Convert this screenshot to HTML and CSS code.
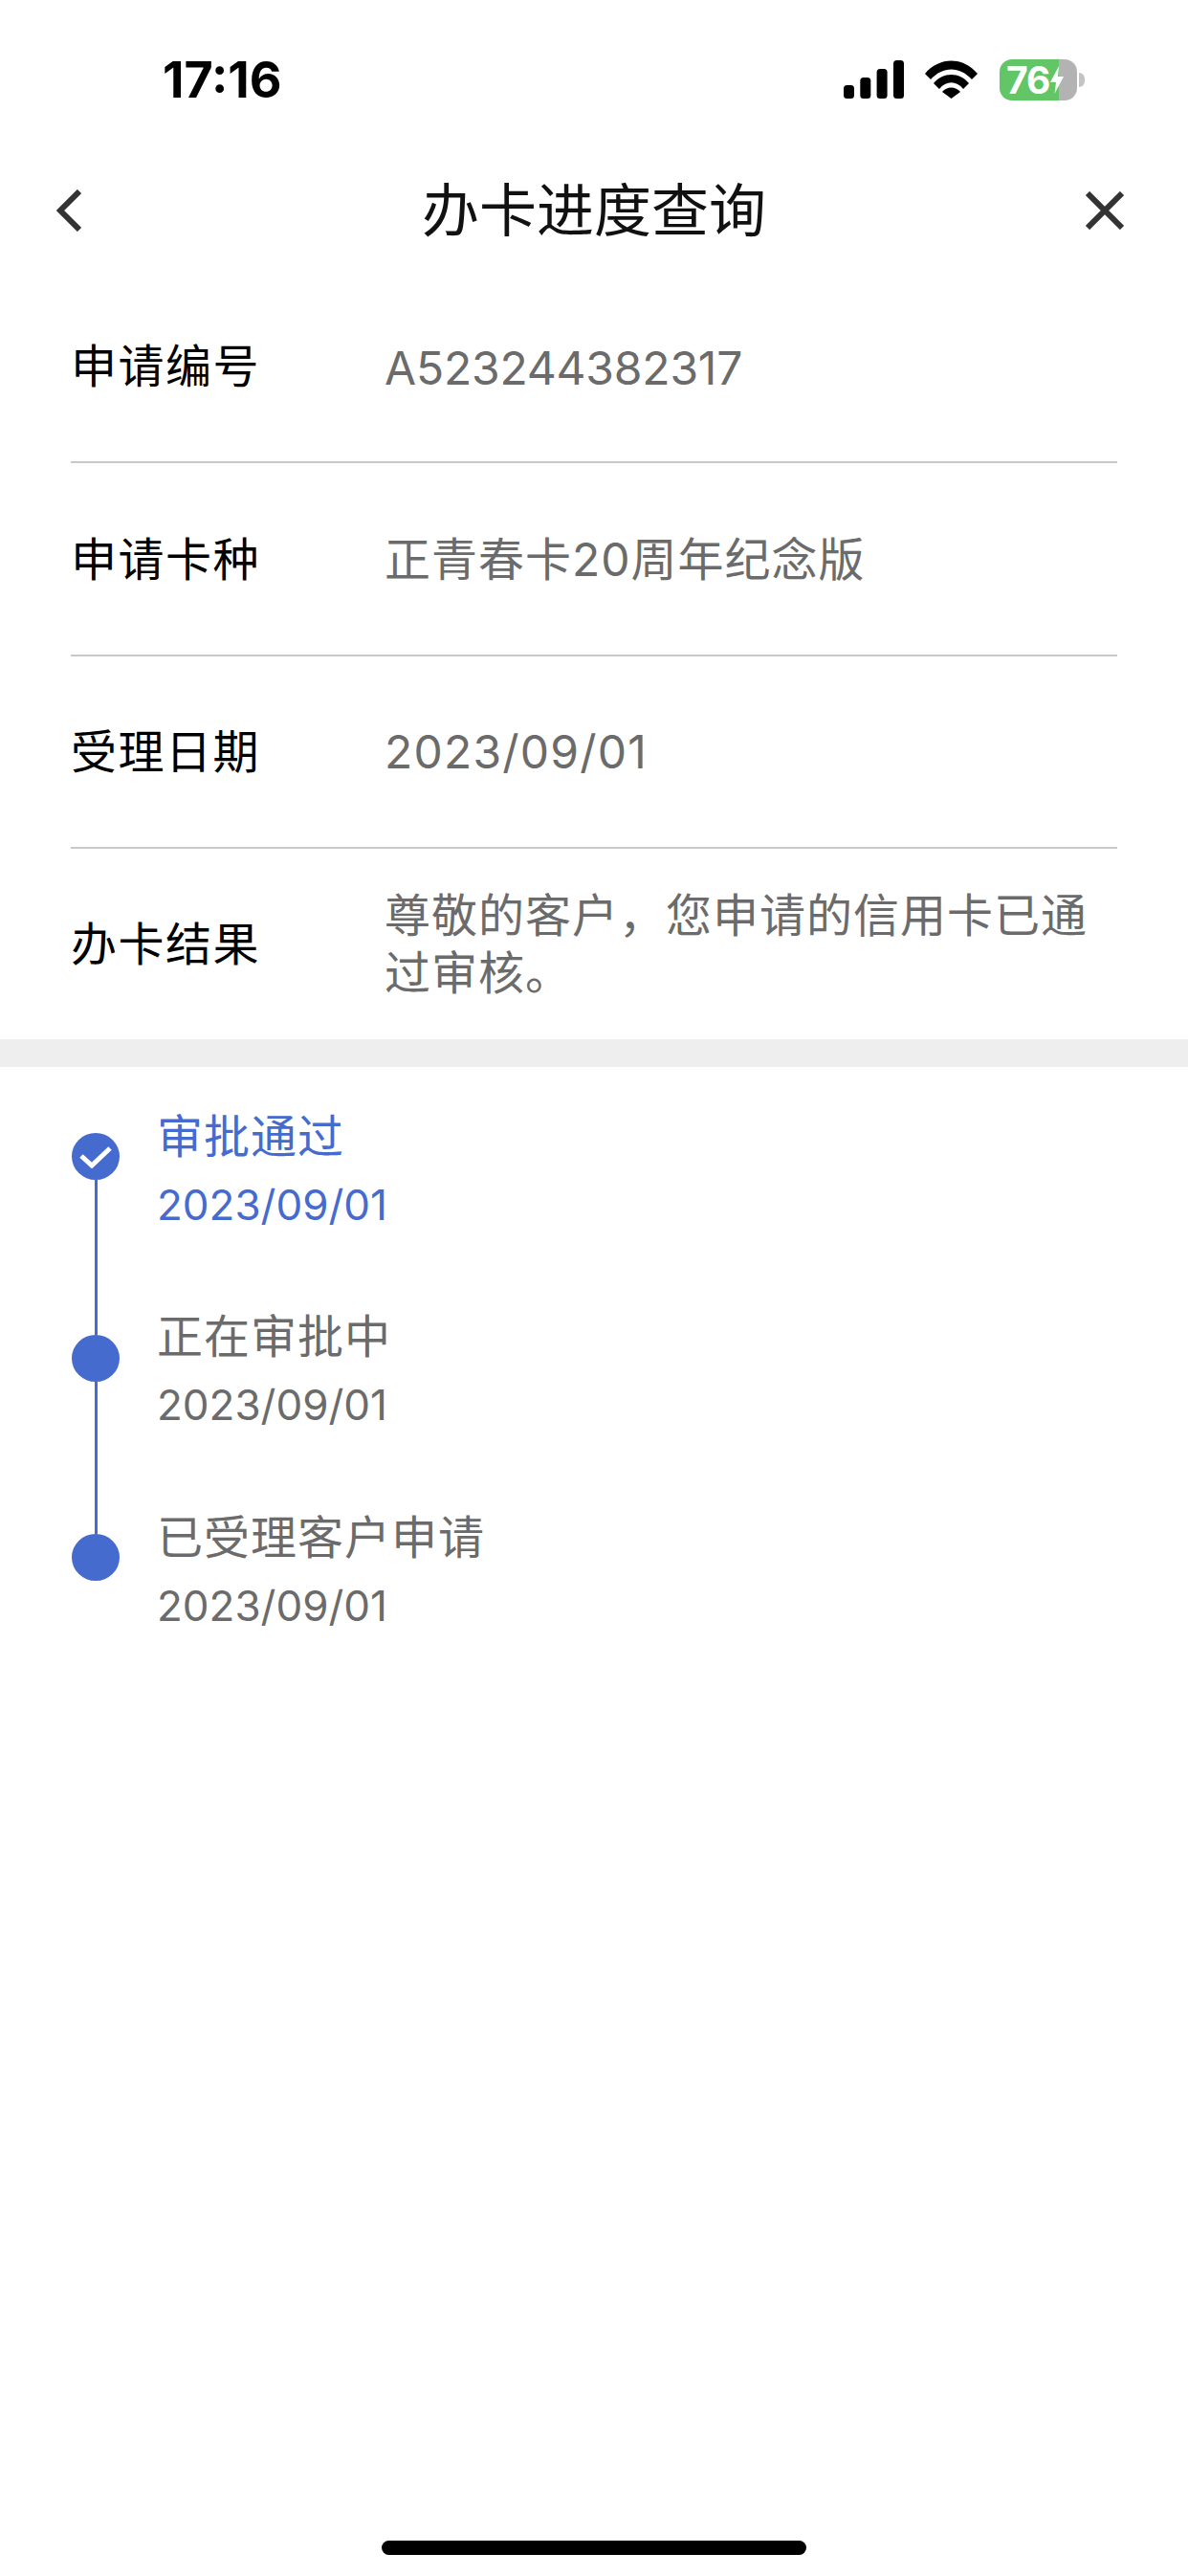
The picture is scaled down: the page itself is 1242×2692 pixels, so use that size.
FILE: index.html
```html
<!DOCTYPE html>
<html lang="zh">
<head>
<meta http-equiv="Content-Type" content="text/html; charset=UTF-8">
<title>办卡进度查询</title>
<link rel="stylesheet" href="styles.css">
</head>
<body>
<div class="screen">
    <!-- 状态栏 -->
    <div class="status">
        <span class="time">17:16</span>
        <div class="status-icons">
            <svg class="signal" width="63" height="40" viewBox="0 0 63 40">
                <rect x="0" y="26" width="11" height="14" rx="3.5"/>
                <rect x="17.3" y="18" width="11" height="22" rx="3.5"/>
                <rect x="34.6" y="9" width="11" height="31" rx="3.5"/>
                <rect x="52" y="0" width="11" height="40" rx="3.5"/>
            </svg>
            <svg class="wifi" width="55" height="40" viewBox="0 0 55 40">
                <path d="M0 14C15 -4 40 -4 55 14L49 20C36 6 19 6 6 20Z"/>
                <path d="M9 24C19 12 36 12 46 24L40 30C33 21 22 21 15 30Z"/>
                <path d="M18 33C23 27 32 27 37 33L27.5 40Z"/>
            </svg>
            <div class="battery">
                <div class="battery-body"><span class="battery-num">76</span>
                    <svg class="bolt" width="14" height="29" viewBox="0 0 14 29"><path d="M9 0L0 17H6L4.500 29L14 11H8Z"/></svg>
                </div>
                <div class="battery-nub"></div>
            </div>
        </div>
    </div>

    <!-- 导航栏 -->
    <div class="nav">
        <svg class="nav-back" width="26" height="44" viewBox="0 0 26 44"><path d="M24 2L4 22L24 42"/></svg>
        <h1 class="nav-title">办卡进度查询</h1>
        <svg class="nav-close" width="40" height="40" viewBox="0 0 40 40"><path d="M2 2L38 38M38 2L2 38"/></svg>
    </div>

    <!-- 申请信息 -->
    <div class="info">
        <div class="row row-top"><span class="label">申请编号</span><span class="value value-no">A523244382317</span></div>
        <div class="row row-top"><span class="label">申请卡种</span><span class="value">正青春卡20周年纪念版</span></div>
        <div class="row row-third"><span class="label">受理日期</span><span class="value value-date">2023/09/01</span></div>
        <div class="row row-last"><span class="label">办卡结果</span><span class="value">尊敬的客户，您申请的信用卡已通过审核。</span></div>
    </div>

    <div class="band"></div>

    <!-- 审批进度 -->
    <ul class="steps">
        <li class="step step-done">
            <div class="dot"><svg width="34" height="24" viewBox="0 0 34 24"><path d="M2 11L13 21L32 3"/></svg></div>
            <div class="step-text"><p class="step-name">审批通过</p><p class="step-date">2023/09/01</p></div>
        </li>
        <li class="step step-mid">
            <div class="dot"></div>
            <div class="step-text"><p class="step-name">正在审批中</p><p class="step-date">2023/09/01</p></div>
        </li>
        <li class="step step-end">
            <div class="dot"></div>
            <div class="step-text"><p class="step-name">已受理客户申请</p><p class="step-date">2023/09/01</p></div>
        </li>
    </ul>

    <div class="home-bar"></div>
</div>
</body>
</html>
```

FILE: styles.css
```css
body,div,ul,li,p,h1{margin:0;padding:0;}
ul{list-style-type:none;}
body{background:#fff;color:#111;font-family:Inter,"Noto Sans CJK SC",sans-serif;}
.screen{position:relative;width:1242px;height:2692px;overflow:hidden;}

.status{display:flex;justify-content:space-between;height:150px;padding:0 108px 0 170px;box-sizing:border-box;}
.time{margin-top:54px;font-size:52px;line-height:60px;font-weight:700;color:#000;}
.status-icons{display:flex;align-items:flex-start;margin-top:62px;}
.signal{margin:1px 22px 0 0;fill:#000;}
.wifi{margin:1px 23px 0 0;fill:#000;}
.battery{display:flex;align-items:center;}
.battery-body{display:flex;align-items:center;width:81px;height:43px;border-radius:13px;background:linear-gradient(to right,#62c566 62px,#b3b3b3 62px);box-sizing:border-box;padding-left:7px;}
.battery-num{color:#fff;font-size:39px;line-height:43px;font-weight:700;letter-spacing:-1px;}
.bolt{flex:none;fill:#fff;margin-left:1px;}
.battery-nub{width:6px;height:15px;margin-left:2px;border-radius:0 6px 6px 0;background:#c4c4c4;}

.nav{display:grid;grid-template-columns:1fr auto 1fr;align-items:center;height:140px;padding:0 59px;}
.nav-back path,.nav-close path{fill:none;stroke:#333;stroke-width:6px;}
.nav-close{justify-self:end;margin-right:8px;}
.nav-title{font-size:60px;line-height:70px;font-weight:400;color:#111;}

.info{margin-top:-8px;padding:0 74px;}
.row{display:flex;align-items:center;height:202px;border-bottom:2px solid #c9c9c9;box-sizing:border-box;}
.row-top{padding-top:2px;}
.row-third{height:201px;}
.row-last{height:199px;border-bottom:none;}
.label{flex:0 0 328px;font-size:48px;line-height:60px;letter-spacing:1.500px;color:#000;}
.value{font-size:48px;line-height:60px;color:#6b6b6b;letter-spacing:1px;}
.value-no{padding-top:3px;letter-spacing:-0.200px;}
.value-date{letter-spacing:1.200px;}

.band{height:29px;background:#eee;}

.steps{padding:0 0 0 75px;}
.step{position:relative;display:flex;height:210px;}
.dot{display:flex;align-items:center;justify-content:center;flex:0 0 50px;height:49px;border-radius:50%;background:#466bce;}
.dot path{fill:none;stroke:#fff;stroke-width:5px;}
.step-done .dot{margin-top:69px;}
.step-mid .dot{margin-top:70px;}
.step-end .dot{margin-top:68px;}
.step-done::after,.step-mid::after{content:"";position:absolute;left:24px;width:3px;background:#466bce;}
.step-done::after{top:118px;height:162px;}
.step-mid::after{top:119px;height:159px;}
.step-text{margin-left:39px;padding-top:43px;}
.step-mid .step-text,.step-end .step-text{padding-top:42px;}
.step-name{font-size:48px;line-height:60px;letter-spacing:1px;color:#6b6b6b;}
.step-date{margin-top:15px;font-size:44px;line-height:52px;color:#6b6b6b;}
.step-done .step-name,.step-done .step-date{color:#466bce;}

.home-bar{position:absolute;left:399px;top:2655px;width:444px;height:15px;border-radius:8px;background:#000;}
```
